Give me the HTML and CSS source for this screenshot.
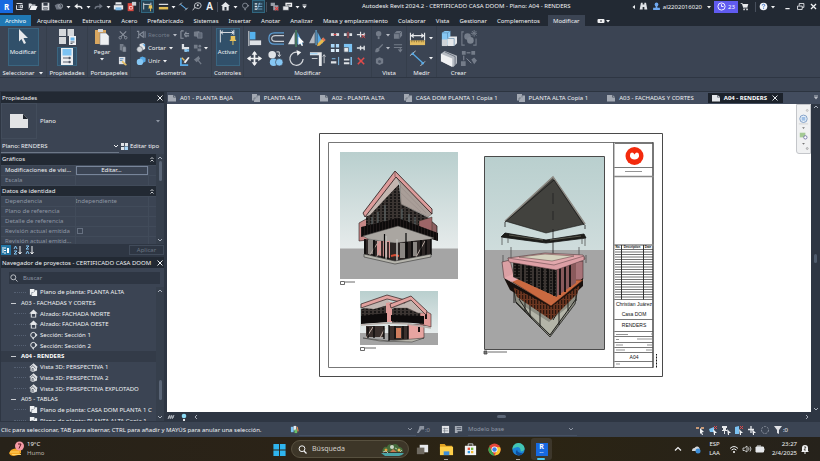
FILE: index.html
```html
<!DOCTYPE html>
<html lang="es">
<head>
<meta charset="utf-8">
<title>Autodesk Revit 2024.2</title>
<link rel="stylesheet" href="styles.css">
</head>
<body>
<svg class="defs" aria-hidden="true">
  <defs>
    <symbol id="caret" viewBox="0 0 6 6"><path d="M1 2h4L3 4.500z" fill="currentColor"/></symbol>
    <symbol id="chev" viewBox="0 0 6 6"><path d="M1 2l2 2 2-2" fill="none" stroke="currentColor"/></symbol>
    <symbol id="close" viewBox="0 0 8 8"><path d="M1.500 1.500l5 5M6.500 1.500l-5 5" fill="none" stroke="currentColor" stroke-width="1"/></symbol>
    <symbol id="sheet" viewBox="0 0 10 8"><path d="M1 1h5.500L9 3v4.500H1z" fill="currentColor"/><path d="M6.500 1v2.200H9" fill="none" stroke="#3b4453" stroke-width=".6"/></symbol>
    <symbol id="plan" viewBox="0 0 10 8"><path d="M1 0h5v1.500h3V8H3V6.500H1z" fill="currentColor"/><path d="M6 1.500v2M3 6.500V4h2" fill="none" stroke="#5b6474" stroke-width=".6"/></symbol>
    <symbol id="elev" viewBox="0 0 9 9"><path d="M4.500.5L.3 4.500h1.500V8.500h5.400v-4h1.500z" fill="#e4e6e9"/><path d="M2.800 5h3.400v2.800H2.800z" fill="#3b4453"/></symbol>
    <symbol id="sect" viewBox="0 0 9 9"><circle cx="4.300" cy="4" r="2.600" fill="none" stroke="#e4e6e9"/><path d="M5 7h-2l1.500 2zM6.500 2l2 2-2 2z" fill="#e4e6e9"/></symbol>
    <symbol id="v3d" viewBox="0 0 9 9"><path d="M4.500.3L.3 4l1.200 1v3l2.500 1 4-1.500V4.800L8.800 4z" fill="#dfe1e4"/><path d="M1.500 4.500L4 2.500l2.500 3M3 8V5.500h1.200V8.500" fill="none" stroke="#59616f" stroke-width=".8"/></symbol>
    <symbol id="house" viewBox="0 0 11 11"><path d="M5.500 1L1 5h1.300v4.500h6.400V5H10z" fill="#e4e6e9"/><path d="M4.500 6h2v3.500h-2z" fill="#222933"/></symbol>
    <linearGradient id="sky" x1="0" y1="0" x2="0" y2="1"><stop offset="0" stop-color="#b9cfce"/><stop offset="1" stop-color="#e6ebeb"/></linearGradient>
    <pattern id="lattice" width="4" height="3" patternUnits="userSpaceOnUse"><rect width="4" height="3" fill="#191716"/><path d="M1 0v3M2.500 1.500h1" stroke="#8a7c76" stroke-width=".6"/></pattern>
    <pattern id="rails" width="3" height="8" patternUnits="userSpaceOnUse"><rect width="3" height="8" fill="#0d0b0b"/><path d="M1.500 0v8" stroke="#4c3b39" stroke-width=".3"/></pattern>
    <pattern id="wood" width="3" height="5" patternUnits="userSpaceOnUse"><rect width="3" height="5" fill="#6a3520"/><path d="M.7 0v4" stroke="#1c0f0a" stroke-width="1"/></pattern>
  </defs>
</svg>

<header class="titlebar">
  <div class="quick">
    <button class="ic app" aria-label="Revit">R</button>
    <button class="ic" aria-label="Inicio"><svg viewBox="0 0 13 13"><path d="M3 3h7M3 5v5M3 10h7M5.500 5.500h1M5.500 7.500h1M8 5h2v3H8z" fill="none" stroke="#d9dce0" stroke-width="1.200"/></svg></button>
    <button class="ic" aria-label="Abrir"><svg viewBox="0 0 13 13"><path d="M2 10V3h3l1 1h4v1.500H4.500z" fill="#dcdfe3"/><path d="M5 6h7.500l-2 4.500H3z" fill="#f2f3f5"/></svg></button>
    <button class="ic" aria-label="Guardar"><svg viewBox="0 0 13 13"><path d="M2 2h9v9H2z" fill="#dcdfe3"/><path d="M4 2.500h5v3H4zM4 7.500h5V10H4z" fill="#333b47"/><path d="M4.500 8.500h4" stroke="#dcdfe3"/></svg></button>
    <button class="ic" aria-label="Sincronizar"><svg viewBox="0 0 13 13"><path d="M2 5l4-2 4 2v5H4z" fill="#6d7480"/><circle cx="9" cy="6" r="2.500" fill="none" stroke="#9aa0aa"/></svg></button>
    <svg class="caret"><use href="#caret"/></svg>
    <button class="ic" aria-label="Deshacer"><svg viewBox="0 0 13 13"><path d="M10.500 9.500q0-3-3-3H4" fill="none" stroke="#f0f1f3" stroke-width="1.500"/><path d="M5.500 3L1.500 6.300 5.500 9.500z" fill="#f0f1f3"/></svg></button>
    <svg class="caret"><use href="#caret"/></svg>
    <button class="ic" aria-label="Rehacer"><svg viewBox="0 0 13 13"><path d="M2.500 9.500q0-3 3-3H9" fill="none" stroke="#6d7480" stroke-width="1.500"/><path d="M7.500 3l4 3.300-4 3.200z" fill="#6d7480"/></svg></button>
    <svg class="caret"><use href="#caret"/></svg>
    <button class="ic" aria-label="Imprimir"><svg viewBox="0 0 13 13"><path d="M3 1.500h7V5H3zM1 5h11v5H1z" fill="#e8eaed"/><path d="M3 7.500h7V11H3z" fill="#7cb9e8"/><path d="M3 4.500h7" stroke="#333b47"/></svg></button>
    <button class="ic" aria-label="PDF"><svg viewBox="0 0 13 13"><path d="M2 2.500h7V12H2z" fill="#d9473f"/><path d="M4 6.500h3.500v3H4z" fill="none" stroke="#f4d4d2"/><path d="M7 1h5v4.500H7z" fill="#c9ccd1"/></svg></button>
    <i class="sep"></i>
    <button class="ic boxed" aria-label="Restricciones"><svg viewBox="0 0 13 13"><path d="M2 2v8M10.500 2v3M2 4h8" fill="none" stroke="#e8eaed"/><path d="M8 5h4v3H8zM7.500 8h5v1h-5zM9.500 9h1v3h-1z" fill="#e9c35b"/></svg></button>
    <button class="ic gap" aria-label="Medir"><svg viewBox="0 0 13 13"><path d="M1 4h11" stroke="#d9dce0" stroke-width="1.500"/><path d="M1 7h11v3H1z" fill="#e2bd54"/></svg></button>
    <svg class="caret"><use href="#caret"/></svg>
    <button class="ic" aria-label="Cota"><svg viewBox="0 0 13 13"><path d="M3 4l7 5.500" stroke="#5aa9e6" stroke-width="1.200"/><path d="M1.500 5l3-3M8.500 11l3-3" stroke="#d9dce0"/></svg></button>
    <button class="ic" aria-label="Etiqueta"><svg viewBox="0 0 13 13"><path d="M2 11l3-4M4 6q0-4 4-4t4 3-3 4l-4-1z" fill="none" stroke="#d9dce0"/><circle cx="8" cy="5" r="1.200" fill="#d9dce0"/></svg></button>
    <button class="ic letter" aria-label="Texto">A</button>
    <i class="sep"></i>
    <button class="ic" aria-label="Vista 3D"><svg viewBox="0 0 11 11"><use href="#house"/></svg></button>
    <svg class="caret"><use href="#caret"/></svg>
    <button class="ic" aria-label="Sección"><svg viewBox="0 0 13 13"><circle cx="6" cy="5.500" r="3" fill="none" stroke="#8b929c"/><path d="M4.500 9h3L6 11.500zM9 4l2 1.500L9 7z" fill="#8b929c"/></svg></button>
    <button class="ic boxed" aria-label="Líneas finas"><svg viewBox="0 0 13 13"><path d="M2 3.500h3M2 6.500h3M2 9.500h3" stroke="#e8eaed" stroke-width="1.500"/><path d="M6 3.500h5M6 6.500h5M6 9.500h5M5 10l3-8" stroke="#8ec8f0" stroke-width=".8"/></svg></button>
    <i class="sep"></i>
    <button class="ic" aria-label="Cerrar vistas"><svg viewBox="0 0 13 13"><path d="M2 2h5v4H2zM5 5h6v6H5z" fill="#9aa0aa"/><path d="M7 7l4 4M11 7l-4 4" stroke="#df3f3f" stroke-width="1.300"/></svg></button>
    <button class="ic" aria-label="Cambiar ventana"><svg viewBox="0 0 13 13"><path d="M4 2h8v5H4z" fill="#f0f1f3"/><path d="M1 6h7v5H1z" fill="#e4e6e9" stroke="#222933" stroke-width=".6"/><path d="M5.500 4h5v1h-5z" fill="#222933"/></svg></button>
    <svg class="caret"><use href="#caret"/></svg>
    <svg class="caret"><path d="M1.500 1h4" stroke="currentColor"/><use href="#caret"/></svg>
  </div>
  <h1>Autodesk Revit 2024.2 - CERTIFICADO CASA DOOM - Plano: A04 - RENDERS</h1>
  <div class="account">
    <svg class="caret left"><use href="#caret"/></svg>
    <button class="ic" aria-label="Buscar"><svg viewBox="0 0 13 13"><path d="M3.500 2h2v2h2V2h2l1.500 8H7.500V7h-2v3H2z" fill="#dfe2e6"/></svg></button>
    <button class="ic" aria-label="Usuario"><svg viewBox="0 0 13 13"><circle cx="6.500" cy="4" r="2.200" fill="#6fa8f0"/><path d="M5.500 5h2v3h3v2.500h-8V8h3z" fill="#6fa8f0"/></svg></button>
    <span>al2202016020</span>
    <svg class="caret user"><use href="#caret"/></svg>
    <button class="trial"><svg viewBox="0 0 10 10"><circle cx="5" cy="5" r="4" fill="none" stroke="#fff"/><path d="M5 2.500V5h2.300" fill="none" stroke="#fff"/></svg>23</button>
    <button class="ic cart" aria-label="Tienda"><svg viewBox="0 0 13 13"><path d="M2 3h2l1.500 5H10" fill="none" stroke="#e8eaed"/><path d="M4 3.500h7L10 7H5z" fill="#e8eaed"/><circle cx="6" cy="10" r="1" fill="#e8eaed"/><circle cx="9.500" cy="10" r="1" fill="#e8eaed"/></svg></button>
    <i class="sep"></i>
    <button class="ic" aria-label="Ayuda"><svg viewBox="0 0 13 13"><circle cx="6.500" cy="6.500" r="4.500" fill="#f2f4f8"/><path d="M5 5.300q0-1.500 1.500-1.500T8 5.200q0 .8-1.400 1.500v.8M6.600 8.500v1" fill="none" stroke="#2c66c4"/></svg></button>
    <svg class="caret help"><use href="#caret"/></svg>
    <button class="ic" aria-label="Minimizar"><svg viewBox="0 0 13 13"><path d="M4 9h5" stroke="#f0f1f3" stroke-width="1.500"/></svg></button>
    <button class="ic" aria-label="Restaurar"><svg viewBox="0 0 13 13"><path d="M3 6h5.500v4H3zM5 5.500V3h5.500v4.500H8.500" fill="none" stroke="#f0f1f3"/></svg></button>
    <button class="ic" aria-label="Cerrar"><svg viewBox="0 0 13 13"><path d="M3.500 3.500l6 6M9.500 3.500l-6 6" stroke="#f0f1f3" stroke-width="1.500"/></svg></button>
  </div>
</header>

<nav class="tabs">
  <button class="file">Archivo</button>
  <button>Arquitectura</button><button>Estructura</button><button>Acero</button><button>Prefabricado</button><button>Sistemas</button><button>Insertar</button><button>Anotar</button><button>Analizar</button><button>Masa y emplazamiento</button><button>Colaborar</button><button>Vista</button><button>Gestionar</button><button>Complementos</button>
  <button class="current">Modificar</button>
  <svg class="pill" viewBox="0 0 8 6"><rect x=".5" y="1" width="7" height="4" rx="1" fill="#f0f1f3"/><path d="M3 3h2" stroke="#222933" stroke-width="1.200"/></svg>
  <svg class="caret"><use href="#caret"/></svg>
</nav>

<section class="ribbon" aria-label="Modificar">
  <div class="group g-sel">
    <div class="tools"><button class="big lit"><svg viewBox="0 0 18 18"><path d="M5 1l9 9H9.500l2.500 5-2 1-2.500-5L5 13.500z" fill="#e6e8eb"/></svg>Modificar</button></div>
    <h2>Seleccionar <svg class="caret"><use href="#caret"/></svg></h2>
  </div>
  <div class="group g-prop">
    <div class="tools stack">
      <button aria-label="Propiedades de tipo"><svg viewBox="0 0 20 18"><path d="M2 1h7v7H2zM10.500 1H17v7h-6.500zM2 9h7v7H2z" fill="#d5d8dc"/><path d="M12 8h7v9h-7z" fill="#f0f1f3"/><path d="M13.500 9.500h4v3h-4z" fill="#66b5ec"/><path d="M13.500 14h4M13.500 15.500h2" stroke="#59616f"/></svg></button>
      <button class="lit" aria-label="Propiedades"><svg viewBox="0 0 20 18"><path d="M4 0h12v18H4z" fill="#eceef0"/><path d="M5.500 2h9v6.500h-9z" fill="#7cc3f3"/><path d="M6 11h5M6 15h5" stroke="#59616f"/><circle cx="12.500" cy="11" r="1.300" fill="#4b5361"/><circle cx="12.500" cy="15" r="1.300" fill="#4b5361"/></svg></button>
    </div>
    <h2>Propiedades</h2>
  </div>
  <div class="group g-clip">
    <div class="tools">
      <button class="big"><svg viewBox="0 0 18 18"><path d="M2 2h11v14H2z" fill="#d9a760"/><path d="M5 1h5v3H5z" fill="#d8dade"/><path d="M7 5h6l3 3v9H7z" fill="#eef0f2" stroke="#6d7480" stroke-width=".5"/></svg>Pegar<svg class="caret"><use href="#caret"/></svg></button>
      <div class="mini one">
        <button aria-label="Cortar"><svg viewBox="0 0 11 11"><path d="M2 1.500l6 6M9 1.500l-6 6" stroke="#8b929e" stroke-width="1.200"/><circle cx="2.500" cy="8.500" r="1.400" fill="none" stroke="#8b929e"/><circle cx="8.500" cy="8.500" r="1.400" fill="none" stroke="#8b929e"/></svg></button>
        <button aria-label="Copiar"><svg viewBox="0 0 11 11"><path d="M2 1h4v2h2v6H4V8H2z" fill="#747c89"/><path d="M5 4h3l1 1v5H5z" fill="#8b929e" stroke="#3b4453" stroke-width=".5"/></svg></button>
        <button aria-label="Igualar tipo"><svg viewBox="0 0 11 11"><path d="M1 1h7v8H1z" fill="#e0e2e6"/><path d="M2 3h4M2 5h3" stroke="#4f86b8"/><path d="M5 5l5 5-2 .5-4-4z" fill="#e3bd62"/></svg></button>
      </div>
    </div>
    <h2>Portapapeles</h2>
  </div>
  <div class="group g-geo">
    <div class="tools">
      <div class="mini lines">
        <button class="off"><svg viewBox="0 0 11 11"><path d="M1 1.500h2v7H1M10 1.500v7M4 5l4-3v6z" fill="none" stroke="#838b98" stroke-width="1.200"/></svg>Recorte<svg class="caret"><use href="#caret"/></svg></button>
        <button><svg viewBox="0 0 11 11"><path d="M4 1l4-1 2 1.500v5L7 8H4z" fill="#e4e6e9"/><circle cx="4" cy="7" r="3.200" fill="#cfd3d8" stroke="#3b4453" stroke-width=".5"/><path d="M7 1.500h3v3z" fill="#5aa9e6"/></svg>Cortar<svg class="caret"><use href="#caret"/></svg></button>
        <button><svg viewBox="0 0 11 11"><path d="M4 2l3-1.500L10.500 2v4L7 8z" fill="#58aae6"/><circle cx="4.300" cy="6.500" r="3.500" fill="#86c7f4"/></svg>Unir<svg class="caret"><use href="#caret"/></svg></button>
      </div>
      <div class="mini two">
        <button aria-label="Recorte de viga"><svg viewBox="0 0 11 11"><path d="M1 1h3M1 1v8h3M5 4h5M5 6.500h5M7 2l-2 3 2 3" fill="none" stroke="#8b929e" stroke-width="1.200"/></svg></button>
        <button aria-label="Dividir cara"><svg viewBox="0 0 11 11"><path d="M1 2l6-1v7l-6-1z" fill="#747c89"/><path d="M5 3h5v6H5z" fill="#5f6876" stroke="#8b929e" stroke-width=".6"/></svg></button>
        <button aria-label="Unión de muros"><svg viewBox="0 0 11 11"><path d="M2 1h2.500v3.500H10V7H7.500v2.500H5V7H2z" fill="#dfe2e6"/><path d="M5 7h5v2.500H5z" fill="#7cc3f3"/></svg></button>
        <button class="more" aria-label="Pintar"><svg viewBox="0 0 11 11"><path d="M1 2h4v4H1zM5 6h4v3H5z" fill="#747c89"/><circle cx="7.500" cy="3.500" r="1.500" fill="#747c89"/></svg><svg class="caret"><use href="#caret"/></svg></button>
        <button aria-label="Editar unión"><svg viewBox="0 0 11 11"><path d="M1 2v8h8" stroke="#58aae6" stroke-width="2" fill="none"/><path d="M4 7l5-6 1.500 1L6 8z" fill="#f0f1f3"/><path d="M2 2l3 3" stroke="#e3bd62" stroke-width="1.500"/></svg></button>
        <button aria-label="Demoler"><svg viewBox="0 0 11 11"><path d="M2 4l4-3 1 2-3 3zM5 4l4 5" stroke="#747c89" stroke-width="1.400" fill="#747c89"/></svg></button>
      </div>
    </div>
    <h2>Geometría</h2>
  </div>
  <div class="group g-ctl">
    <div class="tools"><button class="big lit"><svg viewBox="0 0 20 18"><path d="M1.500 1v14M16.500 1v6M2 4h14M4.500 2L2 4l2.500 2M14 2l2.500 2L14 6" fill="none" stroke="#e6e8eb"/><path d="M13 8h5v4h1v1.500h-7V12h1zM15 13.500h1V18h-1z" fill="#e9c35b"/></svg>Activar</button></div>
    <h2>Controles</h2>
  </div>
  <div class="group g-mod">
    <div class="tools">
      <div class="larges four">
        <button aria-label="Alinear"><svg viewBox="0 0 18 18"><path d="M3 1v16" stroke="#e6e8eb"/><path d="M4 2h6v8H4z" fill="#55b2ee"/><path d="M4 11h12v5H4z" fill="#dfe2e6"/></svg></button>
        <button aria-label="Desfasar"><svg viewBox="0 0 18 18"><path d="M18 3H8Q2 3 2 9t6 6h10" fill="none" stroke="#5d9fd6" stroke-width="1.300"/><path d="M18 6H9Q5 6 5 9t4 3h9" fill="none" stroke="#c9ccd1" stroke-width="1.300"/></svg></button>
        <button aria-label="Simetría"><svg viewBox="0 0 18 18"><path d="M7 2v13H0z" fill="#e6e8eb"/><path d="M10 2v13h6z" fill="#58aae6"/><path d="M8.500 0v18" stroke="#4fa66b"/><path d="M11 7l6 6-2.500.5 1.500 3-1.500.5L13 14l-2 2z" fill="#fff"/></svg></button>
        <button aria-label="Dibujar simetría"><svg viewBox="0 0 18 18"><path d="M6 2v12H0z" fill="#b5bac2"/><path d="M9 2v12h6z" fill="#58aae6"/><path d="M7.500 0v16" stroke="#6cc0f4"/><path d="M15 8l2.500 2.500-6 6-3 .8.800-3z" fill="#e9b94d"/><path d="M15 8l2.500 2.500-1.500 1.500L13.500 9.500z" fill="#de6a5c"/></svg></button>
        <button aria-label="Desplazar"><svg viewBox="0 0 18 18"><path d="M9 2v14M2 9h14" stroke="#f0f1f3" stroke-width="1.800"/><path d="M9 1l3 4H6zM9 17l3-4H6zM1 9l4-3v6zM17 9l-4-3v6z" fill="#f0f1f3"/></svg></button>
        <button aria-label="Copiar"><svg viewBox="0 0 18 18"><circle cx="5.500" cy="5" r="4" fill="#dfe2e6"/><circle cx="7" cy="13" r="4" fill="#86c7f4"/><circle cx="13" cy="13" r="4" fill="#86c7f4" stroke="#3b4453" stroke-width=".7"/><path d="M10 2h3v4M11.500 5L13 7l1.500-2" fill="none" stroke="#e6e8eb"/></svg></button>
        <button aria-label="Rotar"><svg viewBox="0 0 18 18"><path d="M11 2.500a7 7 0 1 0 5 7" fill="none" stroke="#d5d8dc" stroke-width="1.300"/><path d="M9 0l5 2.500L10 6z" fill="#f0f1f3"/></svg></button>
        <button aria-label="Recortar"><svg viewBox="0 0 18 18"><path d="M1 4h11v13" fill="none" stroke="#e6e8eb" stroke-width="3"/><path d="M1 4h8" stroke="#86c7f4"/><path d="M16 14V5M14.500 7L16 5l1.500 2M3 9h6" fill="none" stroke="#c9ccd1"/></svg></button>
      </div>
      <div class="mini three">
        <button aria-label="Dividir"><svg viewBox="0 0 11 11"><path d="M1 5h9" stroke="#dfe2e6" stroke-width="3"/><path d="M5.500 1v9" stroke="#3b4453" stroke-width="2"/><path d="M4 5h3" stroke="#df4a4a" stroke-width="1.500"/></svg></button>
        <button aria-label="Dividir con separación"><svg viewBox="0 0 11 11"><path d="M1 5h3M7 5h3" stroke="#dfe2e6" stroke-width="3"/><path d="M5.500 2v7" stroke="#df4a4a"/></svg></button>
        <button aria-label="Desbloquear"><svg viewBox="0 0 11 11"><path d="M1 5h4M5 2v6M5 5h4M9 3v4" stroke="#dfe2e6" stroke-width="1.300"/><path d="M6 5l4 4M10 5l-4 4" stroke="#df4a4a"/></svg></button>
        <button aria-label="Matriz"><svg viewBox="0 0 11 11"><path d="M1 1h4v4H1zM6.500 1h3.500v4H6.500z" fill="#a9d5f5"/><path d="M1 6.500h4V10H1zM6.500 6.500h3.500V10H6.500z" fill="#dceefb"/></svg></button>
        <button aria-label="Escala"><svg viewBox="0 0 11 11"><path d="M1 1h9v9H1z" fill="#7cc3f3"/><path d="M1 5h5v5H1z" fill="#e6e8eb" stroke="#3b4453" stroke-width=".7"/></svg></button>
        <button aria-label="Bloquear"><svg viewBox="0 0 11 11"><path d="M1 5.500h4M5 3v5M5 5.500h4M9 3v5" stroke="#dfe2e6" stroke-width="1.500"/></svg></button>
        <button aria-label="Alargar"><svg viewBox="0 0 11 11"><path d="M1 7h6" stroke="#dfe2e6" stroke-width="2.500"/><path d="M9.500 1v9M2 3h4" stroke="#86c7f4"/></svg></button>
        <button aria-label="Alargar varios"><svg viewBox="0 0 11 11"><path d="M1 4h6M1 8h6" stroke="#dfe2e6" stroke-width="2"/><path d="M9 1v9" stroke="#86c7f4" stroke-width="1.500"/></svg></button>
        <button aria-label="Suprimir"><svg viewBox="0 0 11 11"><path d="M2 2l7 7M9 2L2 9" stroke="#e04b4b" stroke-width="1.700"/></svg></button>
      </div>
    </div>
    <h2>Modificar</h2>
  </div>
  <div class="group g-view">
    <div class="tools">
      <div class="mini two wide off">
        <button aria-label="Ocultar"><svg viewBox="0 0 11 11"><circle cx="4" cy="4" r="3" fill="#747c89"/><path d="M3 7h2v3H3z" fill="#747c89"/></svg><svg class="caret"><use href="#caret"/></svg></button>
        <button aria-label="Caja"><svg viewBox="0 0 11 11"><path d="M1 4l3-3h6v5L7 9.500H1z" fill="#747c89"/><path d="M1 4h6v5.500M7 4l3-3" stroke="#4c5564" fill="none"/></svg></button>
        <button aria-label="Modificar gráficos"><svg viewBox="0 0 11 11"><path d="M8.500 1.500L4 6M4 6q-3 0-3 3.500 3 0 3.500-2.500" stroke="#747c89" stroke-width="1.500" fill="#747c89"/></svg><svg class="caret"><use href="#caret"/></svg></button>
        <button aria-label="Estilo de línea"><svg viewBox="0 0 11 11"><path d="M1 2h9M1 5h9M8 5v4M6 7l2 2.500L10 7" stroke="#747c89" stroke-width="1.200" fill="none"/></svg></button>
        <button aria-label="Caja de sección"><svg viewBox="0 0 11 11"><path d="M1 3l4-1.500L9 3v5L5 10 1 8z" fill="#747c89"/><circle cx="5" cy="6" r="1.700" fill="#4c5564"/></svg></button>
      </div>
    </div>
    <h2>Vista</h2>
  </div>
  <div class="group g-meas">
    <div class="tools">
      <div class="larges one">
        <button aria-label="Medir"><svg viewBox="0 0 18 18"><path d="M1.500 3v8M16.500 3v8M2 6h14M5 4L2.500 6 5 8M13 4l2.500 2L13 8" fill="none" stroke="#e6e8eb" stroke-width="1.200"/><path d="M1 11h16v5H1z" fill="#e3bd62"/><path d="M3 11v2M5.500 11v2M8 11v2M10.500 11v2M13 11v2M15 11v2" stroke="#6b5527" stroke-width=".7"/></svg><svg class="caret"><use href="#caret"/></svg></button>
        <button aria-label="Cota"><svg viewBox="0 0 18 18"><path d="M4 4l11 10" stroke="#58aae6" stroke-width="1.300"/><path d="M1 6l6-5M12 17l5-5" stroke="#c9ccd1"/><circle cx="4" cy="4" r="1.300" fill="#58aae6"/><circle cx="14.500" cy="14" r="1.300" fill="#58aae6"/></svg><svg class="caret"><use href="#caret"/></svg></button>
      </div>
    </div>
    <h2>Medir</h2>
  </div>
  <div class="group g-new">
    <div class="tools">
      <div class="larges two">
        <button aria-label="Crear grupo"><svg viewBox="0 0 18 18"><path d="M2 3l3-2h6v15H2z" fill="#86c7f4"/><path d="M8 9l3-2h7v7l-3 3H8z" fill="#e6e8eb"/><path d="M2 10h6v7H2z" fill="#cfd3d8"/><path d="M2 3h6v6M8 9h7v8M8 3l3-2" fill="none" stroke="#4f7da3" stroke-width=".6"/></svg></button>
        <button aria-label="Crear similar"><svg viewBox="0 0 18 18"><path d="M4 2H2v14h3M14 16h3V9" stroke="#747c89" fill="none" stroke-width="1.200"/><circle cx="8" cy="7" r="3.500" fill="#747c89"/><circle cx="11" cy="11" r="3.500" fill="#7c8490"/><path d="M15 0v7M11.500 3.500h7M12.500 1l5 5M17.500 1l-5 5" stroke="#747c89"/></svg></button>
        <button aria-label="Crear piezas"><svg viewBox="0 0 18 18"><path d="M1 4l4-3 13 5v8l-4 4L1 12z" fill="#b5bac2"/><path d="M1 4l12 5v9L1 12z" fill="#f0f1f3"/><path d="M5 2l11 5v9" fill="none" stroke="#59616f" stroke-width=".8"/></svg></button>
        <button aria-label="Crear montaje"><svg viewBox="0 0 18 18"><path d="M2 1h4v4H2zM12 1h4v4h-4zM1 12h5v5H1zM12 10l3-2 3 3-3 4z" fill="#747c89"/><path d="M7 3h4M4 6v5M7 9l5 5" stroke="#8b929e"/></svg></button>
      </div>
    </div>
    <h2>Crear</h2>
  </div>
</section>
<div class="options"></div>

<main>
  <aside>
    <section class="panel props">
      <h2 class="bar">Propiedades<button aria-label="Cerrar"><svg><use href="#close"/></svg></button></h2>
      <button class="type"><span class="thumb"><svg viewBox="0 0 18 14"><path d="M0 0h13l5 5v9H0z" fill="#e2e3e5"/><path d="M13 0v5h5z" fill="#1f252e"/></svg></span>Plano<svg class="caret"><use href="#caret"/></svg></button>
      <div class="inst">
        <label class="pick"><select aria-label="Ejemplar"><option>Plano: RENDERS</option></select><svg class="caret"><use href="#chev"/></svg></label>
        <button class="edit"><svg viewBox="0 0 8 8"><path d="M0 0h3.500v3.500H0zM4.500 0H8v3.500H4.500zM0 4.500h3.500V8H0z" fill="#dfe2e6"/><path d="M4 4h4v4H4z" fill="#a9d5f5"/></svg>Editar tipo</button>
      </div>
      <div class="scroller">
        <table>
          <tbody>
            <tr class="head"><th colspan="3">Gráficos<svg viewBox="0 0 6 8"><path d="M1.500 4L3 2.500 4.500 4M1.500 6.500L3 5l1.500 1.500" fill="none" stroke="currentColor" stroke-width=".8"/></svg></th></tr>
            <tr class="on"><td>Modificaciones de visi...</td><td><button>Editar...</button></td><td></td></tr>
            <tr><td>Escala</td><td></td><td></td></tr>
            <tr class="head"><th colspan="3">Datos de identidad<svg viewBox="0 0 6 8"><path d="M1.500 4L3 2.500 4.500 4M1.500 6.500L3 5l1.500 1.500" fill="none" stroke="currentColor" stroke-width=".8"/></svg></th></tr>
            <tr><td>Dependencia</td><td>Independiente</td><td></td></tr>
            <tr><td>Plano de referencia</td><td></td><td></td></tr>
            <tr><td>Detalle de referencia</td><td></td><td></td></tr>
            <tr><td><label for="rev">Revisión actual emitida</label></td><td><input id="rev" type="checkbox" disabled></td><td></td></tr>
            <tr><td>Revisión actual emitid...</td><td></td><td></td></tr>
          </tbody>
        </table>
        <div class="sb"><svg><use href="#chev"/></svg><i class="near"></i><svg><use href="#chev"/></svg></div>
      </div>
      <div class="foot">
        <button class="sort sel" aria-label="Agrupar"><svg viewBox="0 0 10 10"><path d="M2 2v6M3 3h2M3 5.500h2M3 8h2" stroke="#fff" fill="none"/><path d="M6 3h2v5H6z" fill="#fff"/></svg></button>
        <button class="sort" aria-label="Ascendente"><svg viewBox="0 0 10 10"><path d="M1 4l1.500-3L4 4M1 6h3L1 9h3" stroke="#86c7f4" fill="none"/><path d="M7 1v8M5.500 7L7 9l1.500-2" stroke="#f0f1f3" fill="none"/></svg></button>
        <button class="sort" aria-label="Descendente"><svg viewBox="0 0 10 10"><path d="M1 1h3L1 4h3M1 9l1.500-3L4 9" stroke="#86c7f4" fill="none"/><path d="M7 1v8M5.500 7L7 9l1.500-2" stroke="#f0f1f3" fill="none"/></svg></button>
        <button class="apply" disabled>Aplicar</button>
      </div>
    </section>
    <section class="panel browser">
      <h2 class="bar"><span>Navegador de proyectos - CERTIFICADO CASA DOOM</span><button aria-label="Cerrar"><svg><use href="#close"/></svg></button></h2>
      <label class="search"><svg viewBox="0 0 9 9"><circle cx="3.700" cy="3.700" r="2.800" fill="none" stroke="#c9ccd1"/><path d="M6 6l2.500 2.500" stroke="#c9ccd1"/></svg><input type="text" placeholder="Buscar"></label>
      <div class="scroller">
        <ul class="tree">
          <li class="leaf"><svg><use href="#plan"/></svg>Plano de planta: PLANTA ALTA</li>
          <li class="node">A03 - FACHADAS Y CORTES</li>
          <li class="leaf"><svg><use href="#elev"/></svg>Alzado: FACHADA NORTE</li>
          <li class="leaf"><svg><use href="#elev"/></svg>Alzado: FACHADA OESTE</li>
          <li class="leaf"><svg><use href="#sect"/></svg>Sección: Sección 1</li>
          <li class="leaf"><svg><use href="#sect"/></svg>Sección: Sección 2</li>
          <li class="node active">A04 - RENDERS</li>
          <li class="leaf"><svg><use href="#v3d"/></svg>Vista 3D: PERSPECTIVA 1</li>
          <li class="leaf"><svg><use href="#v3d"/></svg>Vista 3D: PERSPECTIVA 2</li>
          <li class="leaf"><svg><use href="#v3d"/></svg>Vista 3D: PERSPECTIVA EXPLOTADO</li>
          <li class="node">A05 - TABLAS</li>
          <li class="leaf"><svg><use href="#plan"/></svg>Plano de planta: CASA DOM PLANTA 1 C</li>
          <li class="leaf"><svg><use href="#plan"/></svg>Plano de planta: PLANTA ALTA Copia 1</li>
        </ul>
        <div class="sb"><svg><use href="#chev"/></svg><i class="far"></i><svg><use href="#chev"/></svg></div>
      </div>
    </section>
  </aside>

  <section class="work">
    <nav class="docs">
      <button><svg><use href="#sheet"/></svg>A01 - PLANTA BAJA</button>
      <button><svg><use href="#plan"/></svg>PLANTA ALTA</button>
      <button><svg><use href="#sheet"/></svg>A02 - PLANTA ALTA</button>
      <button><svg><use href="#plan"/></svg>CASA DOM PLANTA 1 Copia 1</button>
      <button><svg><use href="#plan"/></svg>PLANTA ALTA Copia 1</button>
      <button><svg><use href="#sheet"/></svg>A03 - FACHADAS Y CORTES</button>
      <button class="active"><svg><use href="#sheet"/></svg>A04 - RENDERS<svg class="x"><use href="#close"/></svg></button>
      <svg class="caret"><path d="M1 1h4" stroke="currentColor"/><use href="#caret"/></svg>
    </nav>
    <div class="canvas">
      <svg class="sheetview" viewBox="318 132 346 246" role="img" aria-label="Plano A04 - RENDERS">
        <g fill="none" stroke="#4a4a4a">
          <path d="M319.500 133.500h343v243h-343z"/><path d="M328.500 142.500h325v225h-325z" stroke="#777" stroke-width="1"/>
        </g>
        <!-- Perspectiva 1 -->
        <g>
          <path d="M340 152h118v97H340z" fill="url(#sky)"/><path d="M340 248.500h118V279H340z" fill="#a5a5a5"/>
          <path d="M359 223L368 218 368 240 359 241z" fill="#c68786" stroke="#2a1b1b" stroke-width=".6"/>
          <path d="M430 220L437 226 437 240 430 238z" fill="#8d6061" stroke="#161010" stroke-width=".7"/>
          <path d="M366 216L399 184 401 204 431 219 431 238 366 236z" fill="url(#lattice)"/>
          <path d="M372 232v-15M378 230v-18M385 229v-24M402 229v-20M409 230v-16M415 231v-14" stroke="#6d7d80" stroke-width=".8"/>
          <path d="M419 221L432 217 432 232 419 230z" fill="#9d6567" stroke="#221" stroke-width=".4"/>
          <path d="M365 217L396 176 399 184 370 215z" fill="#c2b5af"/>
          <path d="M396 176L432 214 428 217 401 204 400 184z" fill="#a99e98" stroke="#4b4340" stroke-width=".4"/>
          <path d="M400 186L426 213M400 192L421 212" stroke="#8d827d" stroke-width=".4"/>
          <path d="M363 213L395 171 432 209 432 214 396 177 365 217z" fill="#dc9c9b" stroke="#241717" stroke-width=".8"/>
          <path d="M395 171v6" stroke="#5b4040" stroke-width=".6"/>
          <path d="M361 227L398 218 438 233 438 241 398 228 361 237z" fill="url(#rails)"/>
          <path d="M363 236L398 226 434 238 428 240 395 243 368 239z" fill="#aaa6a1" stroke="#4c4a48" stroke-width=".5"/>
          <path d="M364 239L395 243 431 239 431 255 395 262 364 255z" fill="#2c2625"/>
          <path d="M377 241h13v17l-13-3z" fill="#d69492"/><path d="M368 240h5v14h-5zM400 243h5v15h-5zM413 242h4v14h-4z" fill="#8b8783"/>
          <path d="M369 256l10-15M416 257l9-16M376 258l8-15" stroke="#b8aaa3" stroke-width="1"/>
          <path d="M391 256l4-1 4 1" stroke="#d54b32" stroke-width="2" fill="none"/>
          <path d="M365 239v17M374 240v18M382 241v19M388 242v19M407 242v18M412 241v17M421 240v17M426 240v15M431 239v16" stroke="#080808" stroke-width="1.500"/>
          <path d="M386 236v26M397 239v23" stroke="#c0bfba" stroke-width="1.500"/><path d="M384.500 234v27M406 233v27" stroke="#080808" stroke-width="1.200"/>
          <path d="M364 254L395 261 431 254 431 257 395 264 364 257z" fill="#b6b5ad" stroke="#333" stroke-width=".6"/>
          <path d="M340.500 281.500h4v3h-4zM345 282h10" fill="none" stroke="#444" stroke-width=".8"/>
        </g>
        <!-- Perspectiva 2 -->
        <g>
          <path d="M360 291h78v43h-78z" fill="url(#sky)"/><path d="M360 333h78v12h-78z" fill="#a5a5a5"/>
          <path d="M361 309L387 301 390 305 390 322 361 323z" fill="url(#lattice)"/>
          <path d="M362 308L387 299 392 304 374 309z" fill="#c1b6b1"/>
          <path d="M386 303L392 302 392 322 386 322z" fill="#df9c99"/>
          <path d="M392 309L411 301 423 314 423 322 392 323z" fill="url(#lattice)"/>
          <path d="M420 308L431 314 431 327 420 324z" fill="#e19b98" stroke="#3b2525" stroke-width=".6"/>
          <path d="M408 324L424 325 424 338 408 341z" fill="#e7a5a1" stroke="#3b2525" stroke-width=".6"/>
          <path d="M418 327h2v5h-2zM425 314h2v5h-2z" fill="#1b1111"/>
          <path d="M392 308L412 300 425 313 418 313 407 308z" fill="#c1b6b1" stroke="#5d504c" stroke-width=".4"/>
          <path d="M361 304L387 295 405 300 405 303 387 299 361 308z" fill="#e1a29f" stroke="#2b1a1a" stroke-width=".7"/>
          <path d="M390 304L411 296 427 311 426 315 411 300 391 308z" fill="#e1a29f" stroke="#2b1a1a" stroke-width=".7"/>
          <path d="M361 316L387 313 387 322 361 324zM391 315L424 316 424 324 391 321z" fill="#0e0c0c"/>
          <path d="M361 325l26-2 21 1 23 4" stroke="#b6aea9" stroke-width="1.500" fill="none"/>
          <path d="M389 326h19v14h-19zM366 326h18v11h-18z" fill="#3a302d"/>
          <path d="M396 328h5v10h-5z" fill="#d17d5d"/><path d="M366 338l7-11M380 338l5-10" stroke="#c5b4ab"/>
          <path d="M368 327v11M374 326v12M384 326v13M389 325v16M395 326v13M403 326v13M408 326v14" stroke="#080808" stroke-width="1.300"/>
          <path d="M363 338L388 341 424 338 412 342 380 341z" fill="#bab8ae" stroke="#333" stroke-width=".5"/>
          <path d="M360.500 347.500h4v3h-4zM365 348h11" fill="none" stroke="#444" stroke-width=".8"/>
        </g>
        <!-- Perspectiva explotada -->
        <g>
          <path d="M484.500 156.500h120v193h-120z" fill="url(#sky)"/><path d="M485 250h119v99H485z" fill="#a5a5a5"/>
          <path d="M484.500 156.500h120v193h-120z" fill="none" stroke="#4a4a4a"/>
          <path d="M553 177L585 224 546 233 505 221z" fill="#42423e" stroke="#1b1b1a" stroke-width=".6"/>
          <path d="M505 221l48-44 32 47" fill="none" stroke="#8d8a84" stroke-width="1.500"/><path d="M505 222l49-42 30 45" fill="none" stroke="#151515" stroke-width=".7"/>
          <path d="M553 193v11M553 211v9M553 229v29M505 222v5M585 225v4" stroke="#222" stroke-width=".8"/>
          <path d="M501 237L505 233 546 240 584 234 586 238 546 243z" fill="#1d1d1a" stroke="#111" stroke-width=".8"/><path d="M509 235l34 5M550 240l31-4" stroke="#67665b" stroke-width=".8"/>
          <path d="M502 238v7M508 238v5M585 238v8M582 238v6M511 247v11M579 247v11M503 255v8M586 255v8" stroke="#444" stroke-width=".7"/>
          <path d="M514 290L551 318 578 288 575 304 550 337 516 303z" fill="#8d8e83" stroke="#20201d" stroke-width=".8"/>
          <path d="M519 303L549 322 573 303 550 334z" fill="#b4b5a8"/>
          <path d="M514 291v12M525 298v14M530 300v17M540 310v17M559 306v19M568 298v13M576 289v12M516 302l34 33 26-36M519 299l13 20M565 300l-12 20" stroke="#20201d" stroke-width="1" fill="none"/>
          <path d="M502 262L510 260 514 276 512 281 504 278z" fill="#dba0a4" stroke="#452e30" stroke-width=".6"/>
          <path d="M575 262L583 261 583 279 575 284z" fill="#a87378" stroke="#452e30" stroke-width=".6"/>
          <path d="M504 278L551 305 583 278 583 286 551 316 510 290z" fill="#17100d"/>
          <path d="M513 287L551 307 580 285 577 294 551 320 517 297z" fill="url(#wood)"/>
          <path d="M511 281L520 277 556 294 576 280 583 280 551 306z" fill="#ca6940" stroke="#4d2413" stroke-width=".6"/>
          <path d="M504 278L513 274 521 278 512 282z" fill="#e6aaae"/>
          <path d="M513 261L557 269 557 297 513 277z" fill="url(#lattice)"/>
          <path d="M557 269L576 262 576 283 557 296z" fill="#8a5a5c"/>
          <path d="M517 263v14M523 264v17M529 265v19M535 267v20M542 268v22M548 268v25M554 269v27M560 268v27M565 267v25M570 265v22" stroke="#0a0909" stroke-width="1.700"/>
          <path d="M508 258L545 253 583 255 585 259 556 269 509 261z" fill="#e2a7ac" stroke="#533b3d" stroke-width=".6"/>
          <path d="M519 257L545 254 574 256 552 261z" fill="#d6d3bf" stroke="#6b514f" stroke-width=".6"/>
          <path d="M508 258L554 265 584 256 584 260 556 270 509 262z" fill="#dd9fa5" stroke="#533b3d" stroke-width=".5"/>
          <path d="M484 351h3v3h-3zM488 352h19" fill="#777" stroke="#444" stroke-width=".8"/>
        </g>
        <!-- Cajetín -->
        <g fill="none" stroke="#555">
          <path d="M613.500 142v226M615 143.500h38M652.500 142v226M614 167.500h39M614 299.500h39M614 319.500h39M614 331.500h39M614 336.500h39M614 342.500h39M614 347.500h39M614 352.500h39M614 361.500h39" stroke-width=".8"/>
          <path d="M614 176.500h40M614 245h40" stroke="#888" stroke-width="1.500"/><path d="M614.500 143v225" stroke="#999" stroke-width=".6"/>
          <path d="M621.500 245v54.500M643.500 245v54.500" stroke="#333"/>
          <path d="M615 249.500h38M615 252h38M615 254.500h38M615 257h38M615 259.500h38M615 262h38M615 264.500h38M615 267h38M615 269.500h38M615 272h38M615 274.500h38M615 277h38M615 279.500h38M615 282h38M615 284.500h38M615 287h38M615 289.500h38M615 292h38M615 294.500h38M615 297h38" stroke="#333" stroke-width=".7"/>
          <path d="M625 171.500h17M616 334.500h12M651 334h1M616 339.500h3M637 339h15M616 345h7M647 345h5M616 350h9M646 350h6M616 364h4" stroke="#666" stroke-width=".7"/>
          <path d="M656.500 354v14" stroke="#111" stroke-dasharray="1 .5"/>
        </g>
        <circle cx="634.500" cy="156" r="9" fill="#f32a0d"/><path d="M630 155q0-2.500 2-2.500 1.500 0 2.500 2 1-2 2.500-2 2 0 2 2.500v1.500q-1 3-4.500 3t-4.500-3z" fill="#fff"/>
        <g class="stamp"><text x="634" y="306">Christian Juárez</text><text x="634" y="316">Casa DOM</text><text x="634" y="327">RENDERS</text><text x="634" y="359">A04</text></g>
        <g class="stamp tiny"><text x="618" y="248">No.</text><text x="632" y="248">Description</text><text x="648" y="248">Date</text></g>
      </svg>
      <div class="navbar">
        <svg viewBox="0 0 14 48"><circle cx="7" cy="13" r="4" fill="#eaf2fa" stroke="#7c9cc4"/><path d="M5 11h4v4H5z" fill="#9fc0e6"/><path d="M5.500 22h3L7 24zM5.500 39h3L7 41z" fill="#777"/><path d="M3 28h6v5H3z" fill="#a4c995"/><circle cx="9" cy="33" r="1.800" fill="#fff" stroke="#77a"/><circle cx="11" cy="4" r="1" fill="none" stroke="#999" stroke-width=".6"/><path d="M2 18.500h10" stroke="#d0d0d0"/><circle cx="11" cy="45" r="1" fill="none" stroke="#777" stroke-width=".6"/></svg>
      </div>
    </div>
    <div class="vbar"><svg class="up"><use href="#chev"/></svg><i></i><svg><use href="#chev"/></svg></div>
    <div class="hbar"><svg class="g" viewBox="0 0 9 8"><path d="M1 6l2-4M3 6l2-4M1 4h6M5 6l2-4" stroke="#b9bec6" fill="none"/></svg><svg class="g" viewBox="0 0 9 8"><circle cx="4" cy="3" r="2.300" fill="#8edcf5"/><path d="M3 6h2v2H3z" fill="#e6e8eb"/></svg><svg class="l"><use href="#chev"/></svg><i></i><svg class="r"><use href="#chev"/></svg></div>
  </section>
</main>

<footer class="status">
  <span class="hint">Clic para seleccionar, TAB para alternar, CTRL para añadir y MAYÚS para anular una selección.</span>
  <div class="sets"><svg class="s" viewBox="0 0 10 10"><path d="M1 2h3v6H1z" fill="#7cc3f3"/><path d="M4 1h3v5H4z" fill="#e6e8eb"/><path d="M5 5h3v4H5z" fill="#6abf6a"/><path d="M8 2l1 5" stroke="#e28a4d" stroke-width="1.300"/></svg><span class="combo"><svg class="caret"><use href="#chev"/></svg></span></div>
  <svg class="s" viewBox="0 0 10 10"><path d="M4 1h5v4H6L3 9H1l2-4z" fill="#8b929e"/></svg><span class="dim">:0</span>
  <svg class="s m" viewBox="0 0 10 10"><path d="M1 1h8v8H1z" fill="#e0e2e6"/><path d="M2 4h6M2 6.500h6M4 3v6" stroke="#6d7480" stroke-width=".7"/></svg>
  <svg class="s" viewBox="0 0 10 10"><path d="M1 1h8v6H4v2H1z" fill="#a5abb5"/><path d="M3 3h5M3 5h5" stroke="#4c5564"/></svg>
  <span class="combo model dim">Modelo base<svg class="caret"><use href="#chev"/></svg></span>
  <div class="filters">
    <svg viewBox="0 0 10 10"><path d="M1 3h3M6 3h3" stroke="#c99a78" stroke-width="2"/><path d="M5 3l4 4-2 .3L8 10H7L6 8l-1 1z" fill="#f0f1f3"/></svg>
    <svg viewBox="0 0 10 10"><path d="M1 4l5-2v5H2z" fill="#7cc3f3"/><path d="M6 1l3 3M9 1L6 4" stroke="#df4a4a"/><path d="M5 4l4 4H7v2H6z" fill="#f0f1f3"/></svg>
    <svg viewBox="0 0 10 10"><path d="M1 1h5v2H5v2h1v1H1V5h1V3H1zM3 6h1v3H3z" fill="#e6e8eb"/><path d="M6 4l4 4H8v2H7z" fill="#f0f1f3"/></svg>
    <svg viewBox="0 0 10 10"><path d="M1 2l4-1v8H1z" fill="#7cc3f3"/><path d="M6 1l3 3M9 1L6 4" stroke="#df4a4a"/><path d="M5 4l4 4H7v2H6z" fill="#f0f1f3"/></svg>
    <svg viewBox="0 0 10 10"><path d="M4 1v7M1 4.500h6" stroke="#e6e8eb" stroke-width="1.300"/><path d="M5 4l4 4H7v2H6z" fill="#f0f1f3"/></svg>
    <svg viewBox="0 0 10 10"><circle cx="5" cy="5" r="3.500" fill="none" stroke="#8b929e" stroke-dasharray="2 1"/></svg>
    <svg viewBox="0 0 10 10"><path d="M1 1h8L6 5v4L4 8V5z" fill="#e0e2e6"/></svg><span>:0</span>
  </div>
</footer>

<footer class="taskbar">
  <button class="weather"><svg viewBox="0 0 16 16"><path d="M2 9q4-3 10 0v3q-3 3-7 3t-5-3z" fill="#f5a623"/><path d="M1 11h9M3 13.500h9" stroke="#ffd36a"/><circle cx="10.500" cy="5" r="4.500" fill="#f59aa5"/><path d="M9 3h3l-2 4.500" stroke="#5a1720" fill="none"/></svg><span>19°C<br><em>Humo</em></span></button>
  <div class="dock">
    <button aria-label="Inicio"><svg viewBox="0 0 16 16"><path d="M1.500 2h6v6h-6zM8.500 2h6v6h-6zM1.500 9h6v6h-6zM8.500 9h6v6h-6z" fill="#2fb4ee"/></svg></button>
    <label class="find"><svg viewBox="0 0 9 9"><circle cx="4" cy="3.700" r="2.900" fill="none" stroke="#f0f1f3"/><path d="M6 6l2.500 2.500" stroke="#f0f1f3" stroke-width="1.300"/></svg><input type="text" placeholder="Búsqueda"><svg class="art" viewBox="0 0 25 13"><path d="M1 10h23q-2 3-5 3H5z" fill="#49a4a6"/><path d="M2 9q1-6 5-5 1-4 5-2 5-3 7 2 4 0 4 5z" fill="#456b3b"/><circle cx="6" cy="7" r="1.500" fill="#e6a23c"/><circle cx="12" cy="4" r="2" fill="#cdd7c6"/><path d="M10 9l3-3 4 3z" fill="#c67b4f"/><circle cx="19" cy="7" r="1.500" fill="#e9c35b"/><path d="M3 9l3-1 2 2M15 5l2 1M20 9l2-2" stroke="#dfe8d8" stroke-width=".7" fill="none"/></svg></label>
    <button aria-label="Vista de tareas"><svg viewBox="0 0 16 16"><path d="M5 3h9v8H5z" fill="#e6e8eb"/><path d="M2 6h8v7H2z" fill="#6f6a61"/></svg></button>
    <button class="open" aria-label="Explorador"><svg viewBox="0 0 16 16"><path d="M1 2h5l1.500 2H14v4H1z" fill="#e0a122"/><path d="M1 5h14v9H1z" fill="#ffd04a"/><path d="M5 10h6v4H5z" fill="#3d8ed8"/></svg></button>
    <button aria-label="Store"><svg viewBox="0 0 16 16"><path d="M5.500 4V2h5v2" fill="none" stroke="#cfd3d8"/><path d="M2 4h12v10H2z" fill="#f2f3f5"/><path d="M5 6h2.500v2.500H5z" fill="#e5533d"/><path d="M8.500 6H11v2.500H8.500z" fill="#76b83f"/><path d="M5 9.500h2.500V12H5z" fill="#2f9be6"/><path d="M8.500 9.500H11V12H8.500z" fill="#f5b82e"/></svg></button>
    <button aria-label="Chrome"><svg viewBox="0 0 16 16"><circle cx="8" cy="8" r="6.500" fill="#e5473a"/><path d="M2.400 4.700L6 11l2 3.500A6.500 6.500 0 0 1 2.400 4.700z" fill="#37a551"/><path d="M14 5.500A6.500 6.500 0 0 1 8 14.500L11 8 9 5.500z" fill="#fbc72f"/><circle cx="8" cy="8" r="3.200" fill="#fff"/><circle cx="8" cy="8" r="2.400" fill="#3f7fe8"/></svg></button>
    <button class="open" aria-label="Edge"><svg viewBox="0 0 16 16"><circle cx="8" cy="8" r="6.500" fill="#1c83d6"/><path d="M1.500 8A6.500 6.500 0 0 1 14.500 7q0 3-4 3Q10 5 6 5.500 2.500 6 1.500 8z" fill="#42c5b4"/><path d="M6.500 8q0 4 6.500 4-2 2.500-5 2.500-5-2-1.500-6.500z" fill="#0f4f9e"/></svg></button>
    <button class="revit" aria-label="Revit"><span>R<small>RVT</small></span></button>
  </div>
  <div class="tray">
    <svg viewBox="0 0 10 10"><path d="M2 6.500l3-3 3 3" fill="none" stroke="#f0f1f3" stroke-width="1.200"/></svg>
    <svg class="cloud" viewBox="0 0 10 10"><path d="M1 7q0-3 2.500-3 1-2 3-1.500Q9 3 9 7z" fill="#d5d8dc"/><circle cx="7" cy="7" r="2.500" fill="#3d8ed8"/></svg>
    <span class="lang">ESP<br>LAA</span>
    <svg viewBox="0 0 10 10"><path d="M1 4.500q4-4 8 0M2.500 6q2.500-2.500 5 0" fill="none" stroke="#e6e8eb"/><circle cx="5" cy="8" r="1" fill="#fff"/></svg>
    <svg viewBox="0 0 10 10"><path d="M1 4h1.500L5 2v6L2.500 6.500H1zM6.500 3.500q1 1.500 0 3M8 2.500q2 2.500 0 5" fill="none" stroke="#e6e8eb" stroke-width=".8"/></svg>
    <svg viewBox="0 0 10 10"><path d="M1 3h7.500v5H1zM9 4.500v2" fill="#e6e8eb" stroke="#e6e8eb"/><path d="M3 1v3M5 1v3" stroke="#e6e8eb"/></svg>
    <span class="clock">23:27<br>2/4/2025</span>
    <svg viewBox="0 0 10 10"><path d="M2 7V4q0-3 3-3t3 3v3l1 1H1z" fill="#f0f1f3"/><path d="M4 9h2" stroke="#f0f1f3"/><path d="M4 3h2L4 6h2" stroke="#2a2318" stroke-width=".7" fill="none"/></svg>
  </div>
</footer>
</body>
</html>
```
FILE: styles.css
```css
:root {
  --dark: #222933;
  --panel: #3b4453;
  --deep: #2e3643;
  --line: #4d5869;
  --text: #f0f2f4;
  --dim: #8f97a4;
}
* { box-sizing: border-box; }
body {
  margin: 0;
  height: 100vh;
  display: flex;
  flex-direction: column;
  overflow: hidden;
  background: var(--panel);
  color: var(--text);
  font: 6px/8px "Noto Sans", "Open Sans", sans-serif;
}
button, input, select { font: inherit; color: inherit; background: none; border: 0; padding: 0; margin: 0; }
h1, h2 { font: inherit; margin: 0; }
svg { display: block; flex: none; }
.defs { position: absolute; width: 0; height: 0; }
.caret { width: 6px; height: 6px; }

/* Title bar */
.titlebar { flex: 0 0 15px; display: flex; align-items: flex-start; background: var(--dark); }
.quick, .account { display: flex; align-items: center; height: 13px; }
.ic { flex: none; width: 13px; height: 13px; }
.ic svg { width: 11px; height: 11px; margin: 1px; }
.quick .caret { width: 7px; }
.app { background: #1769e0; color: #fff; font-weight: 700; font-size: 8px; }
.letter { font-size: 10px; font-weight: 600; line-height: 13px; }
.boxed { background: #264254; border: 1px solid #30667f; }
.boxed svg { margin: 0; }
.gap { margin-left: 3px; }
.sep { width: 1px; height: 10px; margin: 0 1px; background: #48505d; }
.titlebar h1 { line-height: 12px; margin-left: 54px; margin-right: auto; white-space: nowrap; }
.left { transform: rotate(90deg); }
.account span { margin: 0 4px 0 0; }
.user { margin-right: 2px; }
.trial { display: flex; align-items: center; gap: 2px; width: 24px; height: 12px; padding-left: 3px; background: #605bf0; color: #fff; }
.trial svg { width: 9px; height: 9px; }
.cart { margin-right: 3px; }
.help { margin-right: 5px; }

/* Ribbon tabs */
.tabs { flex: 0 0 11px; display: flex; align-items: stretch; background: var(--dark); }
.tabs button { padding: 0 5px; white-space: nowrap; }
.tabs .file { margin-right: 1px; background: #2079b4; color: #fff; }
.tabs .current { background: var(--panel); margin-left: 3px; }
.tabs svg { align-self: center; }
.tabs .pill { width: 8px; height: 6px; margin-left: 12px; }

/* Ribbon */
.ribbon { flex: 0 0 52px; display: flex; border-bottom: 1px solid var(--deep); }
.group { display: flex; flex-direction: column; border-right: 1px solid #353e4b; }
.tools { flex: 1; display: flex; justify-content: center; padding-top: 2px; }
.group h2 { display: flex; justify-content: center; align-items: center; gap: 3px; height: 8px; white-space: nowrap; }
.g-sel { width: 47px; }
.g-prop { width: 41px; }
.g-clip { width: 43px; }
.g-geo { width: 81px; }
.g-ctl { width: 32px; }
.g-mod { width: 128px; }
.g-view { width: 35px; }
.g-meas { width: 30px; }
.g-new { width: 43px; border-right: 0; }
.big { display: flex; flex-direction: column; align-items: center; height: 38px; min-width: 24px; }
.big svg { width: 18px; height: 18px; margin-bottom: 2px; }
.big .caret { width: 6px; height: 6px; margin: 0; }
.lit { background: #31506a; outline: 1px solid #3a6580; outline-offset: -1px; }
.g-sel .big { width: 31px; }
.stack { flex-direction: column; align-items: center; justify-content: flex-start; }
.stack svg { width: 20px; height: 18px; margin-bottom: 1px; }
.mini { display: grid; grid-auto-rows: 13px; align-content: start; }
.mini button { display: flex; align-items: center; gap: 2px; height: 13px; }
.mini svg { width: 10px; height: 10px; }
.mini .caret { width: 6px; height: 6px; }
.one { padding-left: 4px; }
.lines { width: 44px; }
.two { grid-template-columns: 13px 13px; }
.mini .more { gap: 0; }
.off { color: #747c89; }
.off .caret { color: #b9bec6; }
.wide { grid-template-columns: 18px 11px; }
.wide button { gap: 0; }
.larges { display: grid; grid-auto-rows: 20px; align-content: start; }
.larges button { display: flex; align-items: center; }
.larges svg { width: 17px; height: 17px; }
.larges .caret { width: 6px; height: 6px; margin-left: 2px; }
.larges.four { grid-template-columns: repeat(4, 21px); }
.larges.two { grid-template-columns: 20px 18px; }
.larges.one { padding: 0; }
.three { grid-template-columns: repeat(3, 13px); }
.options { flex: 0 0 14px; border-bottom: 1px solid #2c3440; }

/* Main area */
main { flex: 1; display: flex; min-height: 0; }
aside { flex: 0 0 166px; display: flex; flex-direction: column; padding: 0 2px 0 1px; background: var(--deep); gap: 1px; }
.panel { display: flex; flex-direction: column; background: var(--panel); min-height: 0; }
.props { flex: 0 0 164px; }
.browser { flex: 1; }
.bar { flex: none; display: flex; justify-content: space-between; align-items: center; height: 11px; padding-left: 1px; background: var(--dark); white-space: nowrap; }
.bar span { flex: 1; min-width: 0; overflow: hidden; }
.bar svg { width: 8px; height: 8px; }
.type { display: flex; align-items: center; height: 36px; text-align: left; gap: 3px; padding-right: 3px; }
.type .caret { margin-left: auto; color: var(--dim); }
.thumb { display: grid; place-items: center; width: 36px; height: 36px; border: 1px solid #424c5b; }
.thumb svg { width: 18px; height: 14px; }
.inst { display: flex; align-items: center; height: 15px; padding-bottom: 1px; gap: 2px; }
.pick { display: flex; align-items: center; width: 118px; height: 13px; border-bottom: 1px solid #6c7787; }
.pick select { flex: 1; appearance: none; padding-left: 1px; }
.edit { display: flex; align-items: center; gap: 2px; white-space: nowrap; }
.edit svg { width: 7px; height: 7px; }
.scroller { flex: 1; display: flex; min-height: 0; overflow: hidden; }
table { flex: 1; border-collapse: collapse; table-layout: fixed; color: var(--dim); align-self: flex-start; }
td, th { padding: 0; height: 10px; line-height: 8px; font-weight: 400; text-align: left; white-space: nowrap; overflow: hidden; border-bottom: 1px solid #414b5a; }
td:first-child { width: 74px; padding-left: 4px; }
td:nth-child(2) { width: 73px; border-left: 1px solid #414b5a; border-right: 1px solid #414b5a; }
.head th { height: 11px; background: var(--dark); color: var(--text); padding-left: 1px; }
.head svg { float: right; width: 6px; height: 8px; margin-right: 1px; }
.on { color: var(--text); }
td button { display: block; width: 100%; height: 9px; border: 1px solid #78859a; line-height: 7px; }
td input { appearance: none; display: block; width: 6px; height: 6px; margin-left: 1px; border: 1px solid #667080; }
.sb { flex: 0 0 8px; display: flex; flex-direction: column; align-items: center; justify-content: space-between; background: #363f4c; color: #a8afba; padding: 1px 0; }
.sb svg { width: 6px; height: 6px; }
.sb svg:first-child, .up { transform: rotate(180deg); }
.sb i { width: 3px; height: 20px; border-radius: 2px; background: #5b6677; }
.near { margin-bottom: auto; }
.far { margin-top: auto; margin-bottom: 14px; }
.foot { flex: 0 0 12px; display: flex; align-items: center; gap: 2px; background: var(--deep); }
.sort { width: 10px; height: 10px; }
.sort svg { width: 10px; height: 10px; }
.sel { background: #2376a5; }
.apply { margin-left: auto; width: 35px; height: 10px; border: 1px solid #414b5a; color: #6d7684; }
.search { flex: none; display: flex; align-items: center; gap: 5px; height: 12px; margin: 4px 4px 3px 8px; padding-left: 1px; background: var(--deep); }
.search svg { width: 8px; height: 8px; }
.search input { flex: 1; min-width: 0; outline: 0; }
input::placeholder { color: var(--dim); opacity: 1; }
.tree { flex: 1; min-width: 0; height: 139px; margin: 0; padding: 0; list-style: none; display: grid; grid-template-rows: repeat(13, 1fr); overflow: hidden; }
.tree li { display: flex; align-items: center; white-space: nowrap; min-height: 0; overflow: hidden; }
.leaf { padding-left: 28px; gap: 2px; }
.leaf::before { content: ""; position: absolute; width: 12px; margin-left: -15px; border-top: 1px dotted #566173; }
.leaf svg { width: 9px; height: 9px; }
.node { padding-left: 10px; }
.node::before { content: ""; width: 5px; height: 1px; margin-right: 5px; background: #c9ccd1; }
.active { font-weight: 700; color: #fff; }
.node.active { background: #333b48; }

/* Work area */
.work { flex: 1; min-width: 0; display: grid; grid-template: 12px 1fr 9px / 1fr 9px; padding-left: 1px; background: var(--deep); }
.docs { grid-column: 1 / 3; display: flex; align-items: center; background: #434d5f; padding-right: 1px; }
.docs button { display: flex; align-items: center; gap: 3px; height: 10px; margin-right: 18px; white-space: nowrap; }
.docs button svg { width: 10px; height: 8px; color: #a3a9b3; }
.docs .active { margin-left: -4px; margin-right: 0; padding: 0 3px; background: #1c222b; }
.docs .active svg { color: #e3e6ea; }
.docs .caret { margin-left: auto; color: #b9bec6; }
.canvas { position: relative; background: #fff; display: flex; align-items: center; justify-content: center; padding: 0 0 6px 4px; min-height: 0; }
.sheetview { width: 346px; height: 246px; }
.stamp { font-family: "Liberation Sans", sans-serif; font-size: 5px; fill: #111; text-anchor: middle; }
.tiny { font-size: 3px; font-weight: 700; }
.navbar { position: absolute; top: 0; right: 0; width: 15px; height: 50px; border: 1px solid #c4c6ca; border-radius: 0 0 0 3px; background: #f0f1f2; }
.navbar svg { width: 13px; height: 48px; }
.vbar { display: flex; flex-direction: column; align-items: center; justify-content: space-between; color: #a8afba; }
.vbar svg, .hbar svg { width: 6px; height: 6px; }
.vbar i { width: 3px; height: 9px; border-radius: 2px; background: #4f5b6d; }
.hbar { grid-column: 1 / 3; display: flex; align-items: center; gap: 4px; color: #a8afba; }
.hbar .g { width: 9px; height: 8px; }
.hbar .l { transform: rotate(90deg); }
.hbar i { width: 9px; height: 3px; border-radius: 2px; background: #5b6677; margin: auto; }
.hbar .r { transform: rotate(-90deg); margin-right: 10px; }

/* Status bar */
.status { flex: 0 0 16px; display: flex; align-items: center; padding: 0 32px 0 1px; background: var(--panel); border-top: 1px solid var(--deep); }
.hint { flex: 0 0 289px; white-space: nowrap; }
.s { width: 9px; height: 9px; }
.sets { display: flex; align-items: center; width: 126px; }
.combo { flex: 1; display: flex; align-items: center; height: 12px; border-bottom: 1px solid #465163; color: var(--dim); }
.combo .caret { margin-left: auto; margin-right: 3px; }
.dim { color: var(--dim); }
.m { margin: 0 4px 0 11px; }
.model { flex: 0 0 109px; margin-left: 5px; }
.filters { display: flex; align-items: center; gap: 3px; margin-left: auto; }
.filters svg { width: 10px; height: 10px; }
.filters span { margin-left: -3px; }

/* Windows taskbar */
.taskbar { flex: 0 0 24px; display: grid; grid-template-columns: 1fr auto 1fr; align-items: center; background: linear-gradient(90deg, #272219, #2b2317 35%, #2b2413 65%, #26221b); }
.taskbar button { display: flex; align-items: center; }
.weather { text-align: left; line-height: 9px; gap: 2px; padding-left: 9px; }
.weather svg { width: 16px; height: 16px; }
.weather em { font-style: normal; color: #b9b5ac; }
.dock { display: flex; align-items: center; gap: 8px; padding-left: 3px; }
.dock button { justify-content: center; width: 16px; height: 22px; position: relative; }
.dock > button:first-child { margin-right: -4px; }
.dock button svg { width: 15px; height: 15px; }
.find { display: flex; align-items: center; gap: 5px; width: 118px; height: 18px; padding: 0 3px 0 6px; border: 1px solid #57503f; border-radius: 9px; background: #3d3628; margin-right: -3px; }
.find svg { width: 9px; height: 9px; }
.find input { flex: 1; min-width: 0; outline: 0; font-size: 7px; }
.find input::placeholder { color: #d2cfc8; }
.find .art { width: 25px; height: 13px; }
.open::after { content: ""; position: absolute; bottom: 0; left: 6px; width: 4px; height: 1px; background: #a8a59e; }
.dock .revit { width: 21px; margin-left: -3px; border-radius: 3px; background: #3d372b; }
.revit::after { content: ""; position: absolute; bottom: 0; left: 6px; width: 8px; height: 2px; border-radius: 1px; background: #4cc9f0; }
.revit span { display: block; width: 12px; height: 13px; background: #1769e0; color: #fff; font-weight: 700; font-size: 7px; line-height: 8px; text-align: center; }
.revit small { display: block; font-size: 2px; line-height: 4px; }
.tray { display: flex; align-items: center; justify-content: flex-end; gap: 3px; padding-right: 10px; line-height: 9px; }
.tray svg { width: 10px; height: 10px; }
.cloud { margin: 0 5px 0 5px; }
.lang { margin-right: 6px; text-align: center; }
.clock { text-align: right; margin-left: 4px; }
```
